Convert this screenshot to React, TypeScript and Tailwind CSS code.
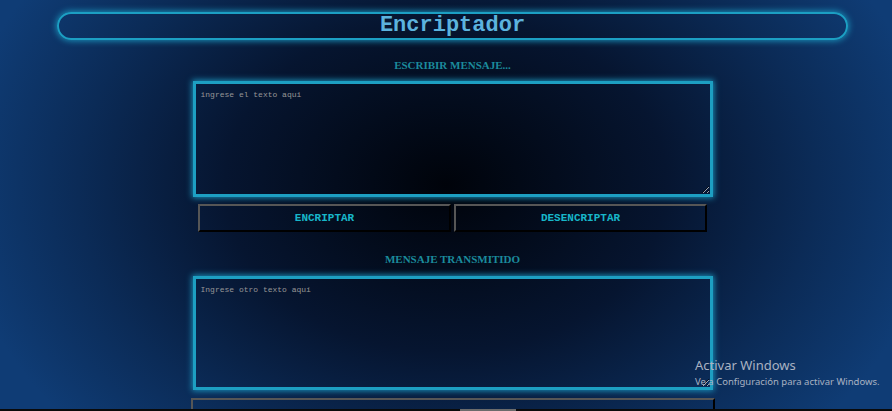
import { useState } from "react"

const Heading = ({ text }: { text: string }) => (
    <p className="text-center text-[11px] leading-[14px] font-bold text-[#1b8b9c] [font-family:'Liberation_Serif',serif]">
        {text}
    </p>
)

const App = () => {
    const [mensaje, setMensaje] = useState("")
    const [resultado, setResultado] = useState("")

    const encriptar = () => {
        setResultado(
            mensaje
                .replace(/e/g, "enter")
                .replace(/i/g, "imes")
                .replace(/a/g, "ai")
                .replace(/o/g, "ober")
                .replace(/u/g, "ufat")
        )
    }
    const desencriptar = () => {
        setResultado(
            mensaje
                .replace(/enter/g, "e")
                .replace(/imes/g, "i")
                .replace(/ai/g, "a")
                .replace(/ober/g, "o")
                .replace(/ufat/g, "u")
        )
    }

    const btn =
        "flex-1 h-[28px] bg-transparent border-2 border-t-[#565656] border-l-[#565656] border-b-black border-r-black text-[11px] font-bold text-[#17b6c9] [font-family:'Liberation_Mono',monospace] cursor-pointer"
    const area =
        "block mx-auto w-[520px] bg-transparent border-[3px] border-[#1d9fc2] shadow-[0_0_6px_1px_#1a8fb8] px-[5px] py-[5px] text-[8px] leading-[12px] text-[#9a9a9a] placeholder:text-[#969696] outline-none [font-family:'Liberation_Mono',monospace]"

    return (
        <div className="relative h-[411px] w-full overflow-hidden bg-[radial-gradient(ellipse_55%_90%_at_50%_45%,#00030a_0%,#061530_45%,#0b2b57_75%,#0f3c75_100%)]">
            <div className="w-[905px] pt-[12px]">
                <header className="mx-[57px] h-[28px] rounded-full border-2 border-[#1c9fc3] shadow-[0_0_6px_1px_#1a8fb8] flex items-center justify-center">
                    <h1 className="text-[22px] leading-none font-bold text-[#5cb3de] [font-family:'Liberation_Mono',monospace]">
                        Encriptador
                    </h1>
                </header>

                <div className="mt-[18px]">
                    <Heading text="ESCRIBIR MENSAJE..." />
                </div>
                <textarea
                    className={`${area} mt-[9px] h-[116px]`}
                    placeholder="ingrese el texto aqui"
                    value={mensaje}
                    onChange={(e) => setMensaje(e.target.value)}
                />

                <div className="mx-auto mt-[7px] flex w-[509px] gap-[3px]">
                    <button className={btn} onClick={encriptar}>ENCRIPTAR</button>
                    <button className={btn} onClick={desencriptar}>DESENCRIPTAR</button>
                </div>

                <div className="mt-[20px]">
                    <Heading text="MENSAJE TRANSMITIDO" />
                </div>
                <textarea
                    className={`${area} mt-[10px] h-[114px]`}
                    placeholder="Ingrese otro texto aquí"
                    value={resultado}
                    readOnly
                />

                <div className="mx-auto mt-[8px] h-[30px] w-[524px] border-2 border-t-[#565656] border-l-[#565656] border-b-black border-r-black" />
            </div>

            <div className="absolute left-[695px] top-[357px] whitespace-nowrap text-[#a9b2c2] [font-family:'Noto_Sans',sans-serif]">
                <p className="text-[13px] leading-[16px]">Activar Windows</p>
                <p className="text-[9.5px] leading-[13px] mt-[2px]">Ve a Configuración para activar Windows.</p>
            </div>

            <div className="absolute bottom-0 left-0 h-[2px] w-full bg-[#0a0a0a]">
                <div className="ml-[460px] h-full w-[56px] bg-[#6b6b6b]" />
            </div>
        </div>
    )
}

export default App
